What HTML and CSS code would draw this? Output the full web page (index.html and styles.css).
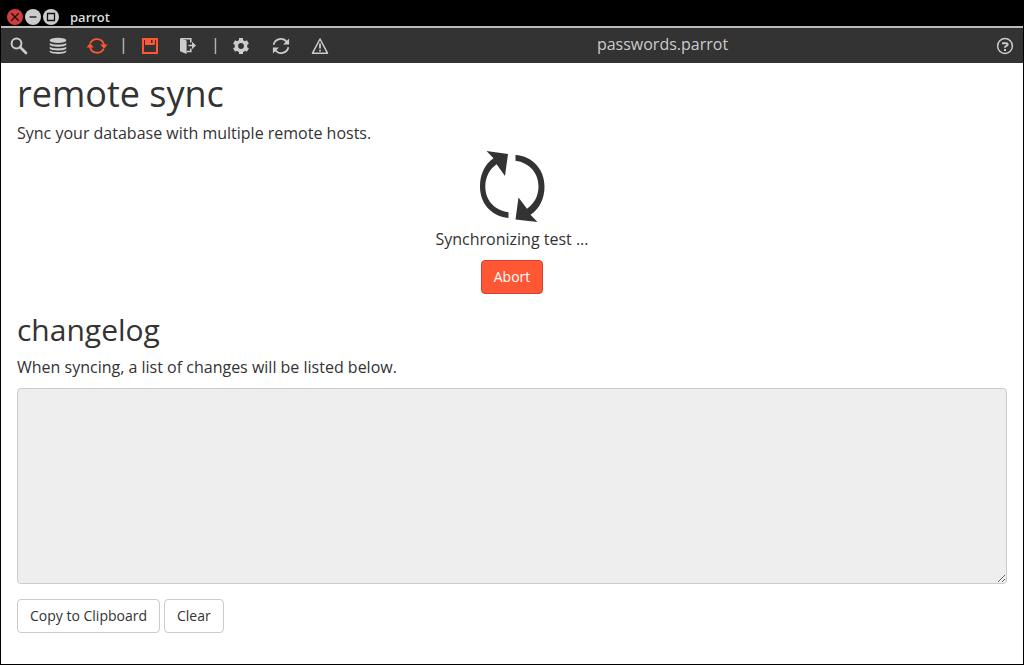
FILE: index.html
```html
<!DOCTYPE html>
<html lang="en">
<head>
<meta charset="utf-8">
<title>parrot</title>
<link rel="stylesheet" href="styles.css">
</head>
<body>
<div class="window">
  <header class="titlebar">
    <button class="win-btn win-close" aria-label="Close window"><svg viewBox="0 0 16 16"><path d="M4.3 4.3l7.4 7.4M11.7 4.3l-7.4 7.4"/></svg></button>
    <button class="win-btn" aria-label="Minimize"><svg viewBox="0 0 16 16"><path d="M4.5 8h7"/></svg></button>
    <button class="win-btn" aria-label="Maximize"><svg viewBox="0 0 16 16"><path d="M4.5 4.5h7v7h-7z"/></svg></button>
    <span class="win-title">parrot</span>
  </header>
  <nav class="toolbar">
    <button class="tool" aria-label="Search"><svg viewBox="0 0 20 20"><circle cx="7.5" cy="7.5" r="4.9" fill="none" stroke="currentColor" stroke-width="2"/><path d="M11 11l6 6" stroke="currentColor" stroke-width="2.6" stroke-linecap="round"/></svg></button>
    <button class="tool" aria-label="Database"><svg viewBox="0 0 20 20" fill="currentColor"><ellipse cx="10" cy="4.4" rx="8.3" ry="2.6"/><path d="M1.7 6.9c2.5 2.1 14.1 2.1 16.6 0v1.600c0 3-16.6 3-16.6 0zM1.7 10.700c2.500 2.100 14.100 2.100 16.600 0v1.600c0 3-16.600 3-16.600 0zM1.700 14.500c2.500 2.100 14.100 2.100 16.600 0v1.100c0 3.200-16.600 3.200-16.600 0z"/></svg></button>
    <button class="tool tool-active" aria-label="Remote sync"><svg viewBox="0 0 20 20"><path d="M3.200 7.400A7.300 7.300 0 0 1 17 9M16.700 12.600A7.300 7.300 0 0 1 3 11" fill="none" stroke="currentColor" stroke-width="1.800"/><path d="M13.200 8.500h7.300l-3.500 4.300zM-.5 11.500h7.300L3 7.200z" fill="currentColor"/></svg></button>
    <span class="sep">|</span>
    <button class="tool tool-active" aria-label="Save"><svg viewBox="0 0 20 20"><path d="M3 3h14v14H3z" fill="none" stroke="currentColor" stroke-width="2"/><path d="M6 2h8v6H6z" fill="currentColor"/><path d="M5.500 4v4.500h9V4" fill="none" stroke="currentColor"/><path d="M11 4h1.500v3H11z" fill="#333"/></svg></button>
    <button class="tool" aria-label="Exit"><svg viewBox="0 0 20 20"><path d="M1 2.200l6.600 2.200V18L1 15.300z" fill="currentColor"/><path d="M2 2.700h9.800v3.800M11.800 12.500v3H7.500M9.500 9.500h5" fill="none" stroke="currentColor" stroke-width="1.600"/><path d="M13 5.800l4 3.700-4 3.700z" fill="currentColor"/></svg></button>
    <span class="sep">|</span>
    <button class="tool" aria-label="Settings"><svg viewBox="0 0 20 20"><circle cx="9" cy="10" r="4.600" fill="none" stroke="currentColor" stroke-width="3.400"/><path d="M9 2v3M9 15v3M2.100 6l2.600 1.500M13.300 12.500l2.600 1.500M2.100 14l2.600-1.500M13.300 7.500L15.900 6" stroke="currentColor" stroke-width="4"/></svg></button>
    <button class="tool" aria-label="Refresh"><svg viewBox="0 0 20 20"><path d="M2.600 8.700A7.400 7.400 0 0 1 15.800 6M17.400 11.300A7.400 7.400 0 0 1 4.200 14" fill="none" stroke="currentColor" stroke-width="1.700"/><path d="M18.100 2.500v6h-6zM1.900 17.500v-6h6z" fill="currentColor"/></svg></button>
    <button class="tool" aria-label="Warnings"><svg viewBox="0 0 20 20"><path d="M10 3l7.500 14.200h-15z" fill="none" stroke="currentColor" stroke-width="1.500" stroke-linejoin="round"/><path d="M10 7.500v5M10 13.700v1.800" stroke="currentColor" stroke-width="1.800"/></svg></button>
    <span class="filename">passwords.parrot</span>
    <button class="tool" aria-label="Help"><svg viewBox="0 0 20 20" fill="none" stroke="currentColor"><circle cx="10" cy="10" r="7.400" stroke-width="1.500"/><path d="M7 7.200h4.200c1.900 0 1.900 2.200.3 2.700-1.200.4-1.500.8-1.500 1.900M10 13v2" stroke-width="2"/></svg></button>
  </nav>
  <main class="content">
    <h1>remote sync</h1>
    <p>Sync your database with multiple remote hosts.</p>
    <section class="progress">
      <svg class="sync-icon" viewBox="0 0 66 72"><path d="M29.500 67V61.200C14 59 6.300 48 6.300 35.500c0-9.500 4.500-17.500 11.300-22.200l8.400 11.700L29 3 7.500 0l7 7.300C5.500 13.500 1 23.500 1 35.500 1 51.500 11 65 29.500 67zM36.500 4V9.800C50.500 11.800 59.500 22 59.500 35.500c0 9.500-4.500 17.500-11.500 22.200L39.500 46.500 36.500 68.500l22 2.500-7-7.200C60.500 58 65.500 47.500 65.500 35.500 65.500 18.500 53.500 5 36.500 4z" fill="#333"/></svg>
      <p>Synchronizing test ...</p>
      <button class="btn btn-danger">Abort</button>
    </section>
    <h2>changelog</h2>
    <p><label for="log">When syncing, a list of changes will be listed below.</label></p>
    <textarea id="log" class="log" readonly></textarea>
    <div class="actions">
      <button class="btn">Copy to Clipboard</button>
      <button class="btn">Clear</button>
    </div>
  </main>
</div>
</body>
</html>
```
FILE: styles.css
```css
* { box-sizing: border-box; }
body {
  margin: 0;
  font: 16px/22px "Open Sans", "Noto Sans", sans-serif;
  color: #333;
  background: #fff;
}
.window {
  display: flex;
  flex-direction: column;
  min-height: 100vh;
  border: 1px solid #000;
  border-top: 0;
}
.titlebar {
  display: flex;
  align-items: flex-end;
  gap: 2px;
  height: 26px;
  padding: 0 6px 1px;
  background: #000;
}
.win-btn {
  width: 16px;
  height: 16px;
  padding: 0;
  border: 0;
  border-radius: 50%;
  background: #ccc;
}
.win-close { background: #d33c3c; }
.win-btn svg {
  display: block;
  fill: none;
  stroke: #111;
  stroke-width: 1.3;
}
.win-title {
  margin-left: 9px;
  color: #ddd;
  font-size: 13px;
  line-height: 16px;
  font-weight: 600;
}
.toolbar {
  display: flex;
  align-items: center;
  gap: 3px;
  height: 37px;
  border-top: 2px solid #bbb;
  background: #333;
  color: #ccc;
}
.tool {
  display: flex;
  justify-content: center;
  width: 36px;
  padding: 0;
  border: 0;
  background: none;
  color: inherit;
}
.tool svg { width: 20px; height: 20px; overflow: visible; }
.tool-active { color: #ff5733; }
.sep { width: 11px; text-align: center; padding-bottom: 4px; }
.filename { flex: 1; text-align: center; padding-bottom: 4px; }
.content { padding: 11px 16px 30px; }
h1, h2, p { margin: 0; }
h1, h2 { font-weight: 400; }
h1 { font-size: 36px; line-height: 40px; margin-bottom: 8px; }
h2 { font-size: 30px; line-height: 34px; margin-bottom: 9px; }
.progress {
  display: flex;
  flex-direction: column;
  align-items: center;
  padding: 7px 0 19px;
}
.sync-icon { width: 66px; height: 72px; margin-bottom: 5px; }
.progress p { margin-bottom: 10px; }
.btn {
  height: 34px;
  padding: 0 12px;
  border: 1px solid #ccc;
  border-radius: 4px;
  background: #fff;
  color: #333;
  font: 14px/20px "Open Sans", "Noto Sans", sans-serif;
}
.btn-danger {
  border-color: #d43f3a;
  background: #ff5733;
  color: #fff;
}
.log {
  display: block;
  width: 100%;
  height: 196px;
  margin-top: 10px;
  border: 1px solid #ccc;
  border-radius: 4px;
  background: #eee;
  resize: vertical;
}
.actions { display: flex; gap: 4px; margin-top: 15px; }
```
